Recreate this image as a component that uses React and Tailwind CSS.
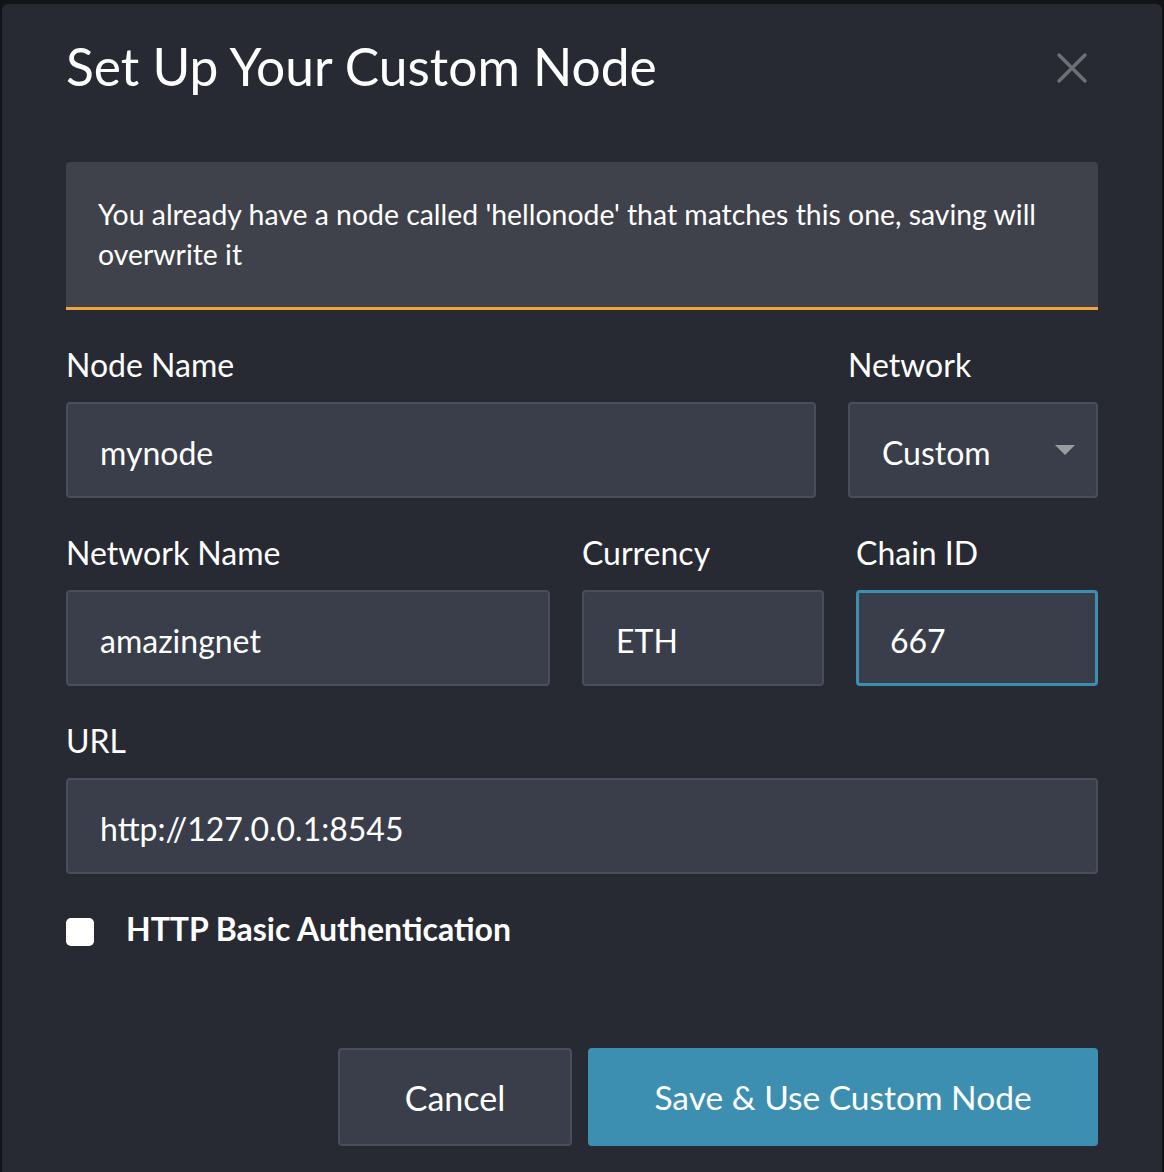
export default function App() {
  const font = { fontFamily: "Lato, 'Noto Sans', sans-serif" };
  return (
    <div className="w-[1164px] h-[1172px] bg-[#131418] pt-[4px] pl-[2px] pr-[2px] overflow-hidden" style={font}>
      <div className="relative h-[1200px] rounded-[6px] bg-[#282a33] px-[64px] pt-[31px] text-white">
        <div className="flex items-start justify-between">
          <h1 className="text-[51.5px] leading-[62px] font-normal text-white">Set Up Your Custom Node</h1>
          <button className="mt-[17px] mr-[10px] w-[32px] h-[32px] flex items-center justify-center">
            <svg width="32" height="32" viewBox="0 0 32 32" fill="none" stroke="#6d6f75" strokeWidth="3.5" strokeLinecap="round">
              <path d="M3 3 L29 29 M29 3 L3 29" />
            </svg>
          </button>
        </div>

        <div className="mt-[65px] rounded-t-[4px] bg-[#3f424b] border-b-[3px] border-[#f2a33c] px-[32px] pt-[32px] pb-[33px] text-[28.4px] leading-[40px] text-white">
          You already have a node called 'hellonode' that matches this one, saving will overwrite it
        </div>

        <div className="mt-[35px] flex gap-[32px]">
          <div className="w-[750px] flex flex-col">
            <label className="text-[32px] leading-[40px]">Node Name</label>
            <div className="mt-[17px] h-[96px] rounded-[4px] border-2 border-[#4a4e5a] bg-[#393e4a] flex items-center px-[32px] pt-[5px] text-[32px]">mynode</div>
          </div>
          <div className="flex-1 flex flex-col">
            <label className="text-[32px] leading-[40px]">Network</label>
            <div className="mt-[17px] h-[96px] rounded-[4px] border-2 border-[#4a4e5a] bg-[#393e4a] flex items-center justify-between pl-[32px] pr-[21px] text-[32px]">
              <span className="pt-[5px]">Custom</span>
              <svg width="20" height="12" viewBox="0 0 20 12"><path d="M0 1 L20 1 L10 11 Z" fill="#9a9ca2" /></svg>
            </div>
          </div>
        </div>

        <div className="mt-[35px] flex gap-[32px]">
          <div className="w-[484px] flex flex-col">
            <label className="text-[32px] leading-[40px]">Network Name</label>
            <div className="mt-[17px] h-[96px] rounded-[4px] border-2 border-[#4a4e5a] bg-[#393e4a] flex items-center px-[32px] pt-[5px] text-[32px]">amazingnet</div>
          </div>
          <div className="w-[242px] flex flex-col">
            <label className="text-[32px] leading-[40px]">Currency</label>
            <div className="mt-[17px] h-[96px] rounded-[4px] border-2 border-[#4a4e5a] bg-[#393e4a] flex items-center px-[32px] pt-[5px] text-[32px]">ETH</div>
          </div>
          <div className="w-[242px] flex flex-col">
            <label className="text-[32px] leading-[40px]">Chain ID</label>
            <div className="mt-[17px] h-[96px] rounded-[4px] border-[3px] border-[#3d8fb2] bg-[#393e4a] flex items-center px-[31px] pt-[5px] text-[32px]">667</div>
          </div>
        </div>

        <div className="mt-[35px] flex flex-col">
          <label className="text-[32px] leading-[40px]">URL</label>
          <div className="mt-[17px] h-[96px] rounded-[4px] border-2 border-[#4a4e5a] bg-[#393e4a] flex items-center px-[32px] pt-[5px] text-[32px]">http://127.0.0.1:8545</div>
        </div>

        <div className="mt-[38px] h-[40px] flex items-start gap-[32px]">
          <div className="mt-[6px] w-[28px] h-[28px] rounded-[5px] bg-white" />
          <span className="text-[32px] font-bold leading-[34px]">HTTP Basic Authentication</span>
        </div>

        <div className="mt-[96px] flex justify-end gap-[16px]">
          <button className="w-[234px] h-[98px] rounded-[4px] border-2 border-[#4a4e5a] bg-[#393e4a] text-[34px] text-white">Cancel</button>
          <button className="w-[510px] h-[98px] rounded-[4px] bg-[#3d8fb2] text-[33.5px] text-white">Save &amp; Use Custom Node</button>
        </div>
      </div>
    </div>
  );
}
